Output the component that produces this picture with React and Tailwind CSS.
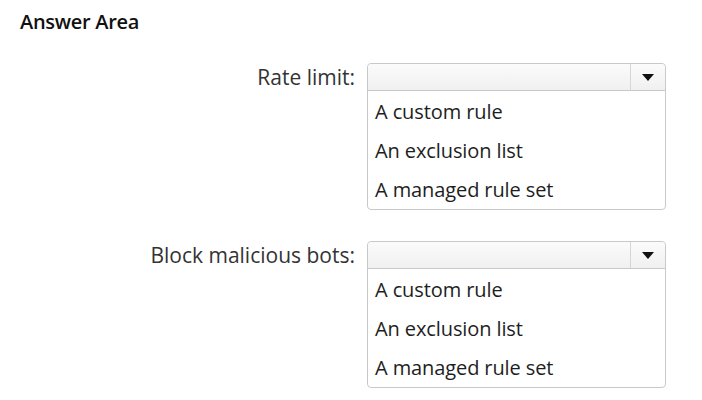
import React from "react";

const options = ["A custom rule", "An exclusion list", "A managed rule set"];

function Dropdown() {
  return (
    <div className="w-[299px] rounded-[4px] border border-[#c9c9c9] bg-white">
      <div className="flex h-[27px] rounded-t-[4px] border-b border-[#c9c9c9] bg-gradient-to-b from-[#fbfbfb] to-[#f0f0f0]">
        <div className="flex-1" />
        <div className="flex w-[35px] items-center justify-center border-l border-[#d6d6d6]">
          <svg width="12" height="7" viewBox="0 0 12 7">
            <polygon points="0,0 12,0 6,7" fill="#111" />
          </svg>
        </div>
      </div>
      <div className="flex flex-col pt-[1px]">
        {options.map((o) => (
          <div key={o} className="flex h-[39px] items-center px-[7px] text-[20px] tracking-[-0.1px] text-[#1e1e1e]">
            {o}
          </div>
        ))}
      </div>
    </div>
  );
}

export default function App() {
  return (
    <div className="h-[400px] w-[702px] bg-white font-['Open_Sans',sans-serif] text-[#222]">
      <div className="pl-[20px] pt-[9px] text-[20px] leading-[26px] font-semibold tracking-[-0.3px] text-[#111]">Answer Area</div>
      <div className="mt-[28px] grid grid-cols-[355px_auto] gap-x-[12px] gap-y-[31px]">
        <div className="text-right text-[21px] leading-[28px] text-[#333]">Rate limit:</div>
        <Dropdown />
        <div className="text-right text-[21px] leading-[28px] text-[#333]">Block malicious bots:</div>
        <Dropdown />
      </div>
    </div>
  );
}
